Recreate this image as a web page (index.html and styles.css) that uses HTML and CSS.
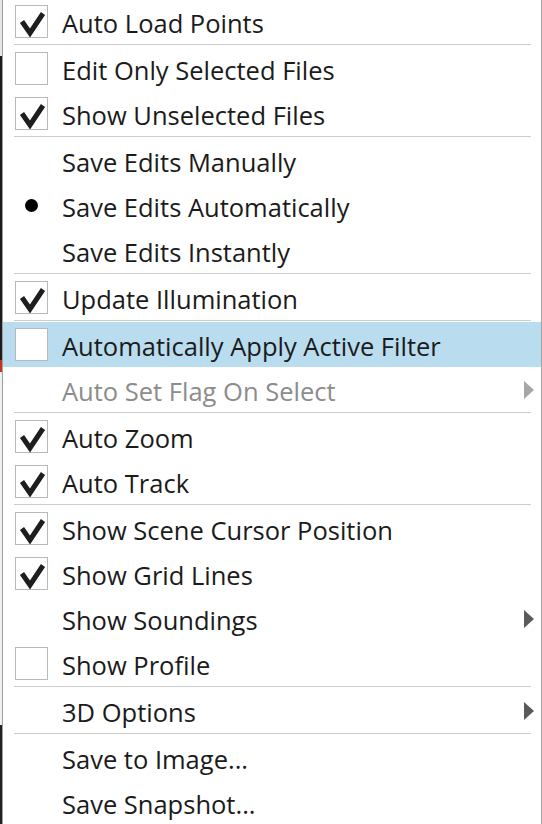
FILE: index.html
```html
<!DOCTYPE html>
<html>
<head>
<meta charset="utf-8">
<link rel="stylesheet" href="styles.css">
</head>
<body>
<div class="page">
  <div class="behind"></div>
  <div class="menu">
    <div class="item"><span class="ic box"><svg viewBox="0 0 33 33" class="chk"><polyline points="7,16.5 15,28 28,8.5"/></svg></span><span class="lbl">Auto Load Points</span></div>
    <div class="sep"></div>
    <div class="item"><span class="ic box"></span><span class="lbl">Edit Only Selected Files</span></div>
    <div class="item"><span class="ic box"><svg viewBox="0 0 33 33" class="chk"><polyline points="7,16.5 15,28 28,8.5"/></svg></span><span class="lbl">Show Unselected Files</span></div>
    <div class="sep"></div>
    <div class="item"><span class="ic"></span><span class="lbl">Save Edits Manually</span></div>
    <div class="item"><span class="ic"><span class="dot"></span></span><span class="lbl">Save Edits Automatically</span></div>
    <div class="item"><span class="ic"></span><span class="lbl">Save Edits Instantly</span></div>
    <div class="sep"></div>
    <div class="item"><span class="ic box"><svg viewBox="0 0 33 33" class="chk"><polyline points="7,16.5 15,28 28,8.5"/></svg></span><span class="lbl">Update Illumination</span></div>
    <div class="sep"></div>
    <div class="item hot"><span class="ic box"></span><span class="lbl">Automatically Apply Active Filter</span></div>
    <div class="item disabled"><span class="ic"></span><span class="lbl">Auto Set Flag On Select</span><span class="arrow"></span></div>
    <div class="sep"></div>
    <div class="item"><span class="ic box"><svg viewBox="0 0 33 33" class="chk"><polyline points="7,16.5 15,28 28,8.5"/></svg></span><span class="lbl">Auto Zoom</span></div>
    <div class="item"><span class="ic box"><svg viewBox="0 0 33 33" class="chk"><polyline points="7,16.5 15,28 28,8.5"/></svg></span><span class="lbl">Auto Track</span></div>
    <div class="sep"></div>
    <div class="item"><span class="ic box"><svg viewBox="0 0 33 33" class="chk"><polyline points="7,16.5 15,28 28,8.5"/></svg></span><span class="lbl">Show Scene Cursor Position</span></div>
    <div class="item"><span class="ic box"><svg viewBox="0 0 33 33" class="chk"><polyline points="7,16.5 15,28 28,8.5"/></svg></span><span class="lbl">Show Grid Lines</span></div>
    <div class="item"><span class="ic"></span><span class="lbl">Show Soundings</span><span class="arrow"></span></div>
    <div class="item"><span class="ic box"></span><span class="lbl">Show Profile</span></div>
    <div class="sep"></div>
    <div class="item"><span class="ic"></span><span class="lbl">3D Options</span><span class="arrow"></span></div>
    <div class="sep"></div>
    <div class="item"><span class="ic"></span><span class="lbl">Save to Image...</span></div>
    <div class="item"><span class="ic"></span><span class="lbl">Save Snapshot...</span></div>
  </div>
</div>
</body>
</html>
```

FILE: styles.css
```css
html, body {
  margin: 0;
  padding: 0;
  background: #ffffff;
  overflow: hidden;
}
.page {
  display: flex;
  width: 542px;
  height: 824px;
  overflow: hidden;
}
.behind {
  width: 2px;
  flex: none;
  background: linear-gradient(to bottom,
    #e6e6e6 0px, #e6e6e6 56px,
    #1c1c1c 56px, #1c1c1c 360px,
    #c8321e 360px, #c8321e 372px,
    #f0f0f0 372px, #f0f0f0 725px,
    #222222 725px, #222222 824px);
}
.menu {
  width: 538px;
  flex: none;
  margin-top: -1px;
  background: #ffffff;
  border-left: 1px solid #a0a0a0;
  border-right: 1px solid #a0a0a0;
  font-family: "Open Sans", "Noto Sans", sans-serif;
  font-size: 25.5px;
  color: #1b1b1b;
  display: flex;
  flex-direction: column;
}
.item {
  height: 45px;
  display: flex;
  align-items: center;
  flex: none;
}
.item.hot {
  background: #badcef;
}
.item.disabled {
  color: #8c8c8c;
}
.ic {
  width: 33px;
  height: 33px;
  margin-left: 12px;
  margin-right: 14px;
  box-sizing: border-box;
  display: flex;
  align-items: center;
  justify-content: center;
  flex: none;
}
.ic.box {
  border: 1px solid #b9b9b9;
  background: #ffffff;
}
.chk {
  width: 33px;
  height: 33px;
  flex: none;
}
.chk polyline {
  fill: none;
  stroke: #1e1e1e;
  stroke-width: 5;
  stroke-linejoin: miter;
  stroke-linecap: butt;
}
.dot {
  width: 13px;
  height: 13px;
  border-radius: 50%;
  background: #000000;
}
.lbl {
  flex: 1;
  white-space: nowrap;
  padding-top: 2px;
}
.arrow {
  width: 0;
  height: 0;
  border-top: 9px solid transparent;
  border-bottom: 9px solid transparent;
  border-left: 10px solid #5a5a5a;
  margin-right: 7px;
  flex: none;
}
.disabled .arrow {
  border-left-color: #a6a6a6;
}
.sep {
  height: 2px;
  flex: none;
  box-sizing: border-box;
  border-top: 1px solid #cccccc;
  margin-left: 11px;
  margin-right: 10px;
}
```
